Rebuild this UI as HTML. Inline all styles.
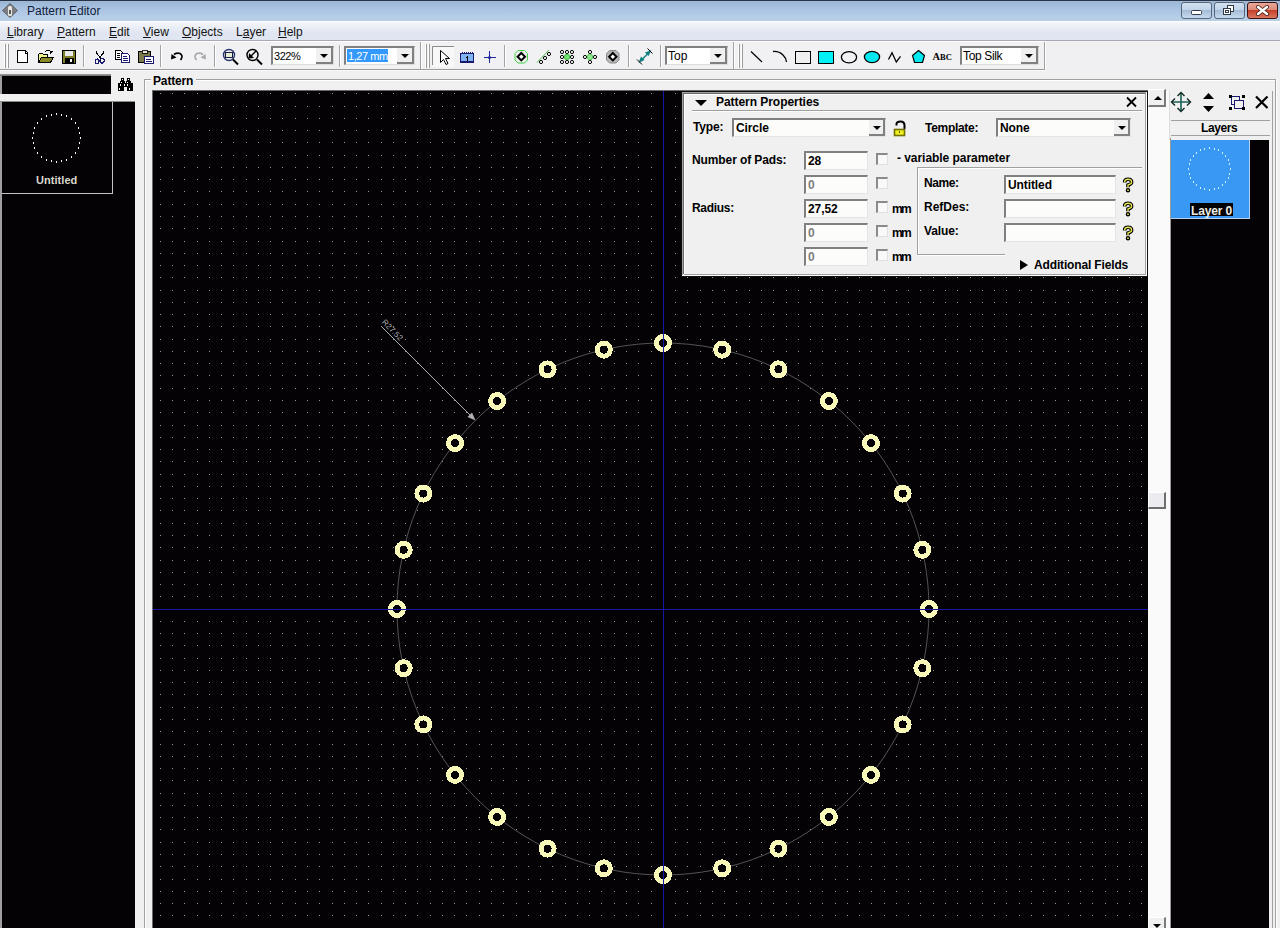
<!DOCTYPE html>
<html><head><meta charset="utf-8"><title>Pattern Editor</title>
<style>
html,body{margin:0;padding:0}
body{width:1280px;height:928px;overflow:hidden;position:relative;background:#f0f0f0;font-family:"Liberation Sans",sans-serif;color:#000}
.a{position:absolute;box-sizing:border-box}
svg.a{display:block}
.t{position:absolute;white-space:nowrap;line-height:normal;font-family:"Liberation Sans",sans-serif}
</style></head><body>
<div class="a" style="left:0px;top:0px;width:1280px;height:22px;background:linear-gradient(#26344a 0,#26344a 1px,#a8b8cc 1px,#9cb6d6 2px,#a2bcdc 5px,#aec6e4 11px,#b6cee8 17px,#b8cfe4 21px,#ffffff 21px)"></div>
<div class="t" style="left:27px;top:4px;font-size:12px;color:#10203a;">Pattern Editor</div>
<div class="a" style="left:0px;top:22px;width:1280px;height:18px;background:linear-gradient(#f6f6fb,#e9edf6 6px,#dfe5f1 12px,#e0e5f2)"></div>
<div class="a" style="left:0px;top:40px;width:1280px;height:1px;background:#a6aab4"></div>
<div class="t" style="left:7px;top:25px;font-size:12px;color:#141414;"><u>L</u>ibrary</div>
<div class="t" style="left:57px;top:25px;font-size:12px;color:#141414;"><u>P</u>attern</div>
<div class="t" style="left:109px;top:25px;font-size:12px;color:#141414;"><u>E</u>dit</div>
<div class="t" style="left:143px;top:25px;font-size:12px;color:#141414;"><u>V</u>iew</div>
<div class="t" style="left:182px;top:25px;font-size:12px;color:#141414;"><u>O</u>bjects</div>
<div class="t" style="left:236px;top:25px;font-size:12px;color:#141414;">L<u>a</u>yer</div>
<div class="t" style="left:278px;top:25px;font-size:12px;color:#141414;"><u>H</u>elp</div>
<div class="a" style="left:0px;top:41px;width:1280px;height:28px;background:#f1f1f3;border-top:1px solid #fff"></div>
<div class="a" style="left:0px;top:69px;width:1045px;height:1px;background:#9c9c9c"></div>
<div class="a" style="left:0px;top:70px;width:1046px;height:1px;background:#fafafa"></div>
<div class="a" style="left:0px;top:71px;width:1280px;height:857px;background:#f0f0f0"></div>
<div class="a" style="left:1046px;top:41px;width:234px;height:30px;background:#f0f0f2"></div>
<div class="a" style="left:4px;top:44px;width:1px;height:24px;background:#fff"></div>
<div class="a" style="left:5px;top:44px;width:1px;height:24px;background:#9a9a9a"></div>
<div class="a" style="left:7px;top:44px;width:1px;height:24px;background:#fff"></div>
<div class="a" style="left:8px;top:44px;width:1px;height:24px;background:#9a9a9a"></div>
<div class="a" style="left:83px;top:45px;width:1px;height:22px;background:#a4a4a4"></div>
<div class="a" style="left:84px;top:45px;width:1px;height:22px;background:#fff"></div>
<div class="a" style="left:160px;top:45px;width:1px;height:22px;background:#a4a4a4"></div>
<div class="a" style="left:161px;top:45px;width:1px;height:22px;background:#fff"></div>
<div class="a" style="left:214px;top:45px;width:1px;height:22px;background:#a4a4a4"></div>
<div class="a" style="left:215px;top:45px;width:1px;height:22px;background:#fff"></div>
<div class="a" style="left:339px;top:45px;width:1px;height:22px;background:#a4a4a4"></div>
<div class="a" style="left:340px;top:45px;width:1px;height:22px;background:#fff"></div>
<div class="a" style="left:420px;top:42px;width:1px;height:27px;background:#a0a0a0"></div>
<div class="a" style="left:421px;top:42px;width:1px;height:27px;background:#fff"></div>
<div class="a" style="left:425px;top:44px;width:1px;height:24px;background:#fff"></div>
<div class="a" style="left:426px;top:44px;width:1px;height:24px;background:#9a9a9a"></div>
<div class="a" style="left:428px;top:44px;width:1px;height:24px;background:#fff"></div>
<div class="a" style="left:429px;top:44px;width:1px;height:24px;background:#9a9a9a"></div>
<div class="a" style="left:504px;top:45px;width:1px;height:22px;background:#a4a4a4"></div>
<div class="a" style="left:505px;top:45px;width:1px;height:22px;background:#fff"></div>
<div class="a" style="left:628px;top:45px;width:1px;height:22px;background:#a4a4a4"></div>
<div class="a" style="left:629px;top:45px;width:1px;height:22px;background:#fff"></div>
<div class="a" style="left:660px;top:45px;width:1px;height:22px;background:#a4a4a4"></div>
<div class="a" style="left:661px;top:45px;width:1px;height:22px;background:#fff"></div>
<div class="a" style="left:733px;top:42px;width:1px;height:27px;background:#a0a0a0"></div>
<div class="a" style="left:734px;top:42px;width:1px;height:27px;background:#fff"></div>
<div class="a" style="left:738px;top:44px;width:1px;height:24px;background:#fff"></div>
<div class="a" style="left:739px;top:44px;width:1px;height:24px;background:#9a9a9a"></div>
<div class="a" style="left:741px;top:44px;width:1px;height:24px;background:#fff"></div>
<div class="a" style="left:742px;top:44px;width:1px;height:24px;background:#9a9a9a"></div>
<div class="a" style="left:1044px;top:42px;width:1px;height:27px;background:#a0a0a0"></div>
<div class="a" style="left:1045px;top:42px;width:1px;height:27px;background:#fff"></div>
<div class="a" style="left:433px;top:47px;width:21px;height:20px;background:#f8f8f8"></div>
<div class="a" style="left:271px;top:46px;width:63px;height:19px;background:#fff;border-top:2px solid #808080;border-left:2px solid #808080;border-right:1px solid #dcdcdc;border-bottom:1px solid #dcdcdc"></div>
<div class="a" style="left:316px;top:48px;width:17px;height:16px;background:#f0f0f0;border-right:2px solid #808080;border-bottom:2px solid #808080"></div>
<div class="a" style="left:320px;top:54px;width:0;height:0;border-left:4px solid transparent;border-right:4px solid transparent;border-top:4px solid #000"></div>
<div class="t" style="left:274px;top:50px;font-size:11px;letter-spacing:-0.45px;">322%</div>
<div class="a" style="left:344px;top:46px;width:71px;height:19px;background:#fff;border-top:2px solid #808080;border-left:2px solid #808080;border-right:1px solid #dcdcdc;border-bottom:1px solid #dcdcdc"></div>
<div class="a" style="left:397px;top:48px;width:17px;height:16px;background:#f0f0f0;border-right:2px solid #808080;border-bottom:2px solid #808080"></div>
<div class="a" style="left:401px;top:54px;width:0;height:0;border-left:4px solid transparent;border-right:4px solid transparent;border-top:4px solid #000"></div>
<div class="a" style="left:347px;top:49px;width:41px;height:13px;background:#3399ff"></div>
<div class="t" style="left:348px;top:50px;font-size:11px;color:#fff;letter-spacing:-0.45px;">1,27 mm</div>
<div class="a" style="left:665px;top:46px;width:63px;height:19px;background:#fff;border-top:2px solid #808080;border-left:2px solid #808080;border-right:1px solid #dcdcdc;border-bottom:1px solid #dcdcdc"></div>
<div class="a" style="left:710px;top:48px;width:17px;height:16px;background:#f0f0f0;border-right:2px solid #808080;border-bottom:2px solid #808080"></div>
<div class="a" style="left:714px;top:54px;width:0;height:0;border-left:4px solid transparent;border-right:4px solid transparent;border-top:4px solid #000"></div>
<div class="t" style="left:668px;top:49px;font-size:12px;letter-spacing:0px;">Top</div>
<div class="a" style="left:960px;top:46px;width:79px;height:19px;background:#fff;border-top:2px solid #808080;border-left:2px solid #808080;border-right:1px solid #dcdcdc;border-bottom:1px solid #dcdcdc"></div>
<div class="a" style="left:1021px;top:48px;width:17px;height:16px;background:#f0f0f0;border-right:2px solid #808080;border-bottom:2px solid #808080"></div>
<div class="a" style="left:1025px;top:54px;width:0;height:0;border-left:4px solid transparent;border-right:4px solid transparent;border-top:4px solid #000"></div>
<div class="t" style="left:963px;top:49px;font-size:12px;letter-spacing:-0.35px;">Top Silk</div>
<div class="a" style="left:0px;top:74px;width:111px;height:2px;background:linear-gradient(#a0a0a0,#707070)"></div>
<div class="a" style="left:0px;top:76px;width:2px;height:18px;background:#a0a0a0"></div>
<div class="a" style="left:2px;top:76px;width:109px;height:18px;background:#040204"></div>
<div class="a" style="left:0px;top:101px;width:135px;height:1px;background:#8a8a8a"></div>
<div class="a" style="left:0px;top:102px;width:2px;height:826px;background:#a0a0a0"></div>
<div class="a" style="left:2px;top:102px;width:133px;height:826px;background:#040204"></div>
<div class="a" style="left:112px;top:102px;width:1px;height:92px;background:#c4c4c4"></div>
<div class="a" style="left:2px;top:193px;width:111px;height:1px;background:#c4c4c4"></div>
<div class="t" style="left:36px;top:174px;font-size:11px;font-weight:bold;color:#d8d8cc;letter-spacing:0.05px;">Untitled</div>
<svg class="a" style="left:118px;top:78px" width="15" height="13" viewBox="118 78 15 13" shape-rendering="crispEdges">
<g fill="#000"><rect x="121" y="78" width="3" height="3"/><rect x="127" y="78" width="3" height="3"/>
<rect x="120" y="81" width="5" height="2"/><rect x="126" y="81" width="5" height="2"/>
<rect x="118" y="83" width="6" height="8"/><rect x="127" y="83" width="6" height="8"/><rect x="123" y="83" width="5" height="4"/></g>
<g fill="#fff"><rect x="122" y="79" width="1" height="1"/><rect x="128" y="79" width="1" height="1"/>
<rect x="121" y="82" width="1" height="1"/><rect x="127" y="82" width="1" height="1"/>
<rect x="120" y="84" width="1" height="2"/><rect x="124" y="84" width="1" height="2"/><rect x="127" y="84" width="1" height="2"/>
<rect x="119" y="88" width="1" height="2"/><rect x="129" y="88" width="1" height="2"/></g></svg>
<div class="a" style="left:144px;top:79px;width:1131px;height:1px;background:#a0a0a0"></div>
<div class="a" style="left:145px;top:80px;width:1130px;height:1px;background:#fff"></div>
<div class="a" style="left:144px;top:79px;width:1px;height:849px;background:#a0a0a0"></div>
<div class="a" style="left:145px;top:80px;width:1px;height:848px;background:#fff"></div>
<div class="a" style="left:1275px;top:79px;width:1px;height:849px;background:#a0a0a0"></div>
<div class="a" style="left:1276px;top:79px;width:1px;height:849px;background:#fff"></div>
<div class="a" style="left:151px;top:72px;width:45px;height:16px;background:#f0f0f0"></div>
<div class="t" style="left:153px;top:74px;font-size:12px;font-weight:bold;letter-spacing:-0.15px;">Pattern</div>
<div class="a" style="left:152px;top:90px;width:996px;height:1px;background:#6a6a6a"></div>
<div class="a" style="left:152px;top:90px;width:1px;height:838px;background:#6a6a6a"></div>
<svg class="a" width="995" height="837" viewBox="153 91 995 837" style="left:153px;top:91px">
<rect x="153" y="91" width="995" height="837" fill="#040205"/>
<defs><path id="gr" d="M160 0h1v1h-1zM172 0h1v1h-1zM184 0h1v1h-1zM197 0h1v1h-1zM209 0h1v1h-1zM221 0h1v1h-1zM233 0h1v1h-1zM246 0h1v1h-1zM258 0h1v1h-1zM270 0h1v1h-1zM282 0h1v1h-1zM295 0h1v1h-1zM307 0h1v1h-1zM319 0h1v1h-1zM332 0h1v1h-1zM344 0h1v1h-1zM356 0h1v1h-1zM368 0h1v1h-1zM381 0h1v1h-1zM393 0h1v1h-1zM405 0h1v1h-1zM417 0h1v1h-1zM430 0h1v1h-1zM442 0h1v1h-1zM454 0h1v1h-1zM466 0h1v1h-1zM479 0h1v1h-1zM491 0h1v1h-1zM503 0h1v1h-1zM516 0h1v1h-1zM528 0h1v1h-1zM540 0h1v1h-1zM552 0h1v1h-1zM565 0h1v1h-1zM577 0h1v1h-1zM589 0h1v1h-1zM601 0h1v1h-1zM614 0h1v1h-1zM626 0h1v1h-1zM638 0h1v1h-1zM651 0h1v1h-1zM663 0h1v1h-1zM675 0h1v1h-1zM687 0h1v1h-1zM700 0h1v1h-1zM712 0h1v1h-1zM724 0h1v1h-1zM736 0h1v1h-1zM749 0h1v1h-1zM761 0h1v1h-1zM773 0h1v1h-1zM786 0h1v1h-1zM798 0h1v1h-1zM810 0h1v1h-1zM822 0h1v1h-1zM835 0h1v1h-1zM847 0h1v1h-1zM859 0h1v1h-1zM871 0h1v1h-1zM884 0h1v1h-1zM896 0h1v1h-1zM908 0h1v1h-1zM920 0h1v1h-1zM933 0h1v1h-1zM945 0h1v1h-1zM957 0h1v1h-1zM970 0h1v1h-1zM982 0h1v1h-1zM994 0h1v1h-1zM1006 0h1v1h-1zM1019 0h1v1h-1zM1031 0h1v1h-1zM1043 0h1v1h-1zM1055 0h1v1h-1zM1068 0h1v1h-1zM1080 0h1v1h-1zM1092 0h1v1h-1zM1105 0h1v1h-1zM1117 0h1v1h-1zM1129 0h1v1h-1zM1141 0h1v1h-1z" fill="#949494"/></defs><g shape-rendering="crispEdges"><use href="#gr" y="93"/><use href="#gr" y="106"/><use href="#gr" y="118"/><use href="#gr" y="130"/><use href="#gr" y="142"/><use href="#gr" y="155"/><use href="#gr" y="167"/><use href="#gr" y="179"/><use href="#gr" y="191"/><use href="#gr" y="204"/><use href="#gr" y="216"/><use href="#gr" y="228"/><use href="#gr" y="241"/><use href="#gr" y="253"/><use href="#gr" y="265"/><use href="#gr" y="277"/><use href="#gr" y="290"/><use href="#gr" y="302"/><use href="#gr" y="314"/><use href="#gr" y="326"/><use href="#gr" y="339"/><use href="#gr" y="351"/><use href="#gr" y="363"/><use href="#gr" y="375"/><use href="#gr" y="388"/><use href="#gr" y="400"/><use href="#gr" y="412"/><use href="#gr" y="425"/><use href="#gr" y="437"/><use href="#gr" y="449"/><use href="#gr" y="461"/><use href="#gr" y="474"/><use href="#gr" y="486"/><use href="#gr" y="498"/><use href="#gr" y="510"/><use href="#gr" y="523"/><use href="#gr" y="535"/><use href="#gr" y="547"/><use href="#gr" y="560"/><use href="#gr" y="572"/><use href="#gr" y="584"/><use href="#gr" y="596"/><use href="#gr" y="609"/><use href="#gr" y="621"/><use href="#gr" y="633"/><use href="#gr" y="645"/><use href="#gr" y="658"/><use href="#gr" y="670"/><use href="#gr" y="682"/><use href="#gr" y="694"/><use href="#gr" y="707"/><use href="#gr" y="719"/><use href="#gr" y="731"/><use href="#gr" y="744"/><use href="#gr" y="756"/><use href="#gr" y="768"/><use href="#gr" y="780"/><use href="#gr" y="793"/><use href="#gr" y="805"/><use href="#gr" y="817"/><use href="#gr" y="829"/><use href="#gr" y="842"/><use href="#gr" y="854"/><use href="#gr" y="866"/><use href="#gr" y="879"/><use href="#gr" y="891"/><use href="#gr" y="903"/><use href="#gr" y="915"/></g>
<circle cx="663" cy="609" r="266" fill="none" stroke="#545454" stroke-width="1"/>
<g fill="#040205" stroke="#f8f8b8" stroke-width="5" shape-rendering="crispEdges"><circle cx="929.00" cy="609.00" r="6.5"/><circle cx="922.33" cy="549.81" r="6.5"/><circle cx="902.66" cy="493.59" r="6.5"/><circle cx="870.97" cy="443.15" r="6.5"/><circle cx="828.85" cy="401.03" r="6.5"/><circle cx="778.41" cy="369.34" r="6.5"/><circle cx="722.19" cy="349.67" r="6.5"/><circle cx="663.00" cy="343.00" r="6.5"/><circle cx="603.81" cy="349.67" r="6.5"/><circle cx="547.59" cy="369.34" r="6.5"/><circle cx="497.15" cy="401.03" r="6.5"/><circle cx="455.03" cy="443.15" r="6.5"/><circle cx="423.34" cy="493.59" r="6.5"/><circle cx="403.67" cy="549.81" r="6.5"/><circle cx="397.00" cy="609.00" r="6.5"/><circle cx="403.67" cy="668.19" r="6.5"/><circle cx="423.34" cy="724.41" r="6.5"/><circle cx="455.03" cy="774.85" r="6.5"/><circle cx="497.15" cy="816.97" r="6.5"/><circle cx="547.59" cy="848.66" r="6.5"/><circle cx="603.81" cy="868.33" r="6.5"/><circle cx="663.00" cy="875.00" r="6.5"/><circle cx="722.19" cy="868.33" r="6.5"/><circle cx="778.41" cy="848.66" r="6.5"/><circle cx="828.85" cy="816.97" r="6.5"/><circle cx="870.97" cy="774.85" r="6.5"/><circle cx="902.66" cy="724.41" r="6.5"/><circle cx="922.33" cy="668.19" r="6.5"/></g>
<g shape-rendering="crispEdges"><rect x="663" y="91" width="1" height="837" fill="#1616a8"/>
<rect x="153" y="609" width="995" height="1" fill="#1616a8"/></g>
<line x1="381.5" y1="326.5" x2="473" y2="418" stroke="#b0b0b0" stroke-width="1"/>
<path d="M475.5 420.5L467.5 417L472 412.5Z" fill="#b0b0b0"/>
<text transform="translate(381.6,322.6) rotate(46)" font-family="Liberation Sans" font-size="8" fill="#b0b0b0">R27.52</text>
</svg>
<div class="a" style="left:1148px;top:91px;width:22px;height:837px;background:#fafafa"></div>
<div class="a" style="left:1148px;top:89px;width:18px;height:18px;background:#f0f0f0;border-top:1px solid #fff;border-left:1px solid #fff;border-right:2px solid #7a7a7a;border-bottom:2px solid #7a7a7a"></div>
<div class="a" style="left:1154px;top:96px;width:0;height:0;border-left:4px solid transparent;border-right:4px solid transparent;border-bottom:4px solid #000"></div>
<div class="a" style="left:1148px;top:492px;width:18px;height:17px;background:#ececf0;border-top:1px solid #fff;border-left:1px solid #fff;border-right:2px solid #6e6e6e;border-bottom:2px solid #6e6e6e"></div>
<div class="a" style="left:1148px;top:917px;width:18px;height:19px;background:#f0f0f0;border-top:1px solid #fff;border-left:1px solid #fff;border-right:2px solid #7a7a7a;border-bottom:2px solid #7a7a7a"></div>
<div class="a" style="left:1153px;top:924px;width:0;height:0;border-left:4px solid transparent;border-right:4px solid transparent;border-top:4px solid #000"></div>
<div class="a" style="left:1169px;top:91px;width:1px;height:49px;background:#dcdcdc"></div>
<div class="a" style="left:1170px;top:138px;width:1px;height:790px;background:#9a9a9a"></div>
<div class="a" style="left:1272px;top:91px;width:1px;height:837px;background:#a0a0a0"></div>
<div class="a" style="left:1171px;top:120px;width:99px;height:1px;background:#a0a0a0"></div>
<div class="a" style="left:1171px;top:135px;width:99px;height:1px;background:#a0a0a0"></div>
<div class="a" style="left:1171px;top:121px;width:99px;height:14px;background:#f0f0f0"></div>
<div class="t" style="left:1201px;top:121px;font-size:12px;font-weight:bold;letter-spacing:-0.4px;">Layers</div>
<div class="a" style="left:1171px;top:140px;width:98px;height:788px;background:#040204"></div>
<div class="a" style="left:1171px;top:140px;width:79px;height:79px;background:#3898f4"></div>
<div class="a" style="left:1171px;top:218px;width:79px;height:1px;background:#b8d0ec"></div>
<div class="a" style="left:1249px;top:140px;width:1px;height:79px;background:#b8d0ec"></div>
<div class="a" style="left:1190px;top:203px;width:43px;height:13px;background:#040204"></div>
<div class="t" style="left:1191px;top:204px;font-size:12px;font-weight:bold;color:#ecece4;letter-spacing:-0.15px;">Layer 0</div>
<svg class="a" style="left:0;top:0" width="1280" height="300" viewBox="0 0 1280 300"><g fill="#f6f6f6" shape-rendering="crispEdges"><rect x="80" y="137" width="1" height="2"/><rect x="79" y="132" width="1" height="2"/><rect x="78" y="127" width="1" height="2"/><rect x="75" y="122" width="1" height="2"/><rect x="71" y="118" width="1" height="2"/><rect x="66" y="115" width="1" height="2"/><rect x="61" y="114" width="1" height="2"/><rect x="56" y="113" width="1" height="2"/><rect x="51" y="114" width="1" height="2"/><rect x="46" y="115" width="1" height="2"/><rect x="41" y="118" width="1" height="2"/><rect x="37" y="122" width="1" height="2"/><rect x="34" y="127" width="1" height="2"/><rect x="33" y="132" width="1" height="2"/><rect x="32" y="137" width="1" height="2"/><rect x="33" y="142" width="1" height="2"/><rect x="34" y="147" width="1" height="2"/><rect x="37" y="152" width="1" height="2"/><rect x="41" y="156" width="1" height="2"/><rect x="46" y="159" width="1" height="2"/><rect x="51" y="160" width="1" height="2"/><rect x="56" y="161" width="1" height="2"/><rect x="61" y="160" width="1" height="2"/><rect x="66" y="159" width="1" height="2"/><rect x="71" y="156" width="1" height="2"/><rect x="75" y="152" width="1" height="2"/><rect x="78" y="147" width="1" height="2"/><rect x="79" y="142" width="1" height="2"/></g><g fill="#c8f0ff" shape-rendering="crispEdges"><rect x="1230" y="168" width="1" height="2"/><rect x="1229" y="163" width="1" height="2"/><rect x="1228" y="159" width="1" height="2"/><rect x="1225" y="155" width="1" height="2"/><rect x="1222" y="152" width="1" height="2"/><rect x="1218" y="149" width="1" height="2"/><rect x="1214" y="148" width="1" height="2"/><rect x="1209" y="147" width="1" height="2"/><rect x="1204" y="148" width="1" height="2"/><rect x="1200" y="149" width="1" height="2"/><rect x="1196" y="152" width="1" height="2"/><rect x="1193" y="155" width="1" height="2"/><rect x="1190" y="159" width="1" height="2"/><rect x="1189" y="163" width="1" height="2"/><rect x="1188" y="168" width="1" height="2"/><rect x="1189" y="173" width="1" height="2"/><rect x="1190" y="177" width="1" height="2"/><rect x="1193" y="181" width="1" height="2"/><rect x="1196" y="184" width="1" height="2"/><rect x="1200" y="187" width="1" height="2"/><rect x="1204" y="188" width="1" height="2"/><rect x="1209" y="189" width="1" height="2"/><rect x="1214" y="188" width="1" height="2"/><rect x="1218" y="187" width="1" height="2"/><rect x="1222" y="184" width="1" height="2"/><rect x="1225" y="181" width="1" height="2"/><rect x="1228" y="177" width="1" height="2"/><rect x="1229" y="173" width="1" height="2"/></g></svg>
<svg class="a" style="left:1168px;top:88px" width="106" height="30" viewBox="1168 88 106 30">
<path d="M1181 93V111M1172 102H1190" stroke="#1a6058" stroke-width="1.6"/>
<path d="M1177.5 96L1181 92.5L1184.5 96M1177.5 108L1181 111.5L1184.5 108M1175 98.5L1171.5 102L1175 105.5M1187 98.5L1190.5 102L1187 105.5" fill="none" stroke="#102820" stroke-width="1.4"/>
<path d="M1203 99L1208.5 93L1214 99Z M1203 106L1208.5 112L1214 106Z" fill="#000"/>
<g shape-rendering="crispEdges">
<rect x="1231.5" y="96.5" width="8" height="8" fill="none" stroke="#181870"/>
<rect x="1234.5" y="100.5" width="9" height="8" fill="#f0f0f0" stroke="#181870"/>
<rect x="1229" y="95" width="3" height="3" fill="#000"/><rect x="1242" y="95" width="3" height="3" fill="#000"/>
<rect x="1229" y="107" width="3" height="3" fill="#000"/><rect x="1242" y="107" width="3" height="3" fill="#000"/>
</g>
<path d="M1256 96.5L1267.5 108M1267.5 96.5L1256 108" stroke="#000" stroke-width="2.2"/>
</svg>
<div class="a" style="left:681px;top:91px;width:467px;height:186px;background:#f0f0f0;border:1px solid #101010"></div>
<div class="a" style="left:682px;top:92px;width:464px;height:1px;background:#a0a0a0"></div>
<div class="a" style="left:682px;top:92px;width:1px;height:183px;background:#a0a0a0"></div>
<div class="a" style="left:683px;top:93px;width:462px;height:1px;background:#6a6a6a"></div>
<div class="a" style="left:683px;top:93px;width:1px;height:181px;background:#6a6a6a"></div>
<div class="a" style="left:684px;top:94px;width:461px;height:1px;background:#fff"></div>
<div class="a" style="left:684px;top:94px;width:1px;height:180px;background:#fff"></div>
<div class="a" style="left:1145px;top:93px;width:1px;height:182px;background:#a0a0a0"></div>
<div class="a" style="left:684px;top:274px;width:462px;height:1px;background:#a0a0a0"></div>
<div class="a" style="left:1146px;top:92px;width:1px;height:184px;background:#fff"></div>
<div class="a" style="left:682px;top:275px;width:465px;height:1px;background:#fff"></div>
<div class="a" style="left:695px;top:100px;width:0;height:0;border-left:6px solid transparent;border-right:6px solid transparent;border-top:6px solid #000"></div>
<div class="t" style="left:716px;top:95px;font-size:12px;font-weight:bold;letter-spacing:-0.05px;">Pattern Properties</div>
<div class="a" style="left:692px;top:110px;width:450px;height:1px;background:#a0a0a0"></div>
<div class="a" style="left:692px;top:111px;width:450px;height:1px;background:#fff"></div>
<svg class="a" style="left:1125px;top:96px" width="14" height="12" viewBox="0 0 14 12"><path d="M2 1.5L11 10.5M11 1.5L2 10.5" stroke="#000" stroke-width="1.8"/></svg>
<div class="t" style="left:693px;top:120px;font-size:12px;font-weight:bold;letter-spacing:-0.15px;">Type:</div>
<div class="a" style="left:732px;top:118px;width:154px;height:19px;background:#fcfcfa;border-top:2px solid #808080;border-left:2px solid #808080;border-right:1px solid #e4e4e4;border-bottom:1px solid #e4e4e4"></div>
<div class="t" style="left:736px;top:121px;font-size:12px;font-weight:bold;letter-spacing:-0.1px;">Circle</div>
<div class="a" style="left:869px;top:120px;width:16px;height:16px;background:#f0f0f0;border-right:2px solid #808080;border-bottom:2px solid #808080"></div>
<div class="a" style="left:873px;top:126px;width:0;height:0;border-left:4px solid transparent;border-right:4px solid transparent;border-top:4px solid #000"></div>
<div class="t" style="left:925px;top:121px;font-size:12px;font-weight:bold;letter-spacing:-0.3px;">Template:</div>
<div class="a" style="left:996px;top:118px;width:135px;height:19px;background:#fcfcfa;border-top:2px solid #808080;border-left:2px solid #808080;border-right:1px solid #e4e4e4;border-bottom:1px solid #e4e4e4"></div>
<div class="t" style="left:1000px;top:121px;font-size:12px;font-weight:bold;letter-spacing:-0.1px;">None</div>
<div class="a" style="left:1114px;top:120px;width:16px;height:16px;background:#f0f0f0;border-right:2px solid #808080;border-bottom:2px solid #808080"></div>
<div class="a" style="left:1118px;top:126px;width:0;height:0;border-left:4px solid transparent;border-right:4px solid transparent;border-top:4px solid #000"></div>
<div class="t" style="left:692px;top:153px;font-size:12px;font-weight:bold;letter-spacing:-0.1px;">Number of Pads:</div>
<div class="t" style="left:692px;top:201px;font-size:12px;font-weight:bold;letter-spacing:-0.3px;">Radius:</div>
<div class="a" style="left:804px;top:151px;width:64px;height:19px;background:#fcfcfa;border-top:2px solid #808080;border-left:2px solid #808080;border-right:1px solid #e4e4e4;border-bottom:1px solid #e4e4e4"></div>
<div class="t" style="left:808px;top:154px;font-size:12px;font-weight:bold;letter-spacing:-0.1px;">28</div>
<div class="a" style="left:876px;top:153px;width:12px;height:12px;background:#f8f8f8;border-top:2px solid #8a8a8a;border-left:2px solid #8a8a8a;border-right:1px solid #e0e0e0;border-bottom:1px solid #e0e0e0"></div>
<div class="a" style="left:804px;top:175px;width:64px;height:19px;background:#fcfcfa;border-top:2px solid #808080;border-left:2px solid #808080;border-right:1px solid #e4e4e4;border-bottom:1px solid #e4e4e4"></div>
<div class="t" style="left:808px;top:178px;font-size:12px;font-weight:bold;color:#808080;letter-spacing:-0.1px;">0</div>
<div class="a" style="left:876px;top:177px;width:12px;height:12px;background:#f8f8f8;border-top:2px solid #8a8a8a;border-left:2px solid #8a8a8a;border-right:1px solid #e0e0e0;border-bottom:1px solid #e0e0e0"></div>
<div class="a" style="left:804px;top:199px;width:64px;height:19px;background:#fcfcfa;border-top:2px solid #808080;border-left:2px solid #808080;border-right:1px solid #e4e4e4;border-bottom:1px solid #e4e4e4"></div>
<div class="t" style="left:808px;top:202px;font-size:12px;font-weight:bold;letter-spacing:-0.1px;">27,52</div>
<div class="a" style="left:876px;top:201px;width:12px;height:12px;background:#f8f8f8;border-top:2px solid #8a8a8a;border-left:2px solid #8a8a8a;border-right:1px solid #e0e0e0;border-bottom:1px solid #e0e0e0"></div>
<div class="a" style="left:804px;top:223px;width:64px;height:19px;background:#fcfcfa;border-top:2px solid #808080;border-left:2px solid #808080;border-right:1px solid #e4e4e4;border-bottom:1px solid #e4e4e4"></div>
<div class="t" style="left:808px;top:226px;font-size:12px;font-weight:bold;color:#808080;letter-spacing:-0.1px;">0</div>
<div class="a" style="left:876px;top:225px;width:12px;height:12px;background:#f8f8f8;border-top:2px solid #8a8a8a;border-left:2px solid #8a8a8a;border-right:1px solid #e0e0e0;border-bottom:1px solid #e0e0e0"></div>
<div class="a" style="left:804px;top:247px;width:64px;height:19px;background:#fcfcfa;border-top:2px solid #808080;border-left:2px solid #808080;border-right:1px solid #e4e4e4;border-bottom:1px solid #e4e4e4"></div>
<div class="t" style="left:808px;top:250px;font-size:12px;font-weight:bold;color:#808080;letter-spacing:-0.1px;">0</div>
<div class="a" style="left:876px;top:249px;width:12px;height:12px;background:#f8f8f8;border-top:2px solid #8a8a8a;border-left:2px solid #8a8a8a;border-right:1px solid #e0e0e0;border-bottom:1px solid #e0e0e0"></div>
<div class="t" style="left:897px;top:151px;font-size:12px;font-weight:bold;letter-spacing:-0.05px;">- variable parameter</div>
<div class="t" style="left:892px;top:202px;font-size:12px;font-weight:bold;letter-spacing:-1.6px;">mm</div>
<div class="t" style="left:892px;top:226px;font-size:12px;font-weight:bold;letter-spacing:-1.6px;">mm</div>
<div class="t" style="left:892px;top:250px;font-size:12px;font-weight:bold;letter-spacing:-1.6px;">mm</div>
<div class="a" style="left:917px;top:167px;width:225px;height:1px;background:#a0a0a0"></div>
<div class="a" style="left:918px;top:168px;width:224px;height:1px;background:#fff"></div>
<div class="a" style="left:917px;top:167px;width:1px;height:88px;background:#a0a0a0"></div>
<div class="a" style="left:918px;top:168px;width:1px;height:87px;background:#fff"></div>
<div class="a" style="left:917px;top:254px;width:88px;height:1px;background:#a0a0a0"></div>
<div class="a" style="left:918px;top:255px;width:87px;height:1px;background:#fff"></div>
<div class="t" style="left:924px;top:176px;font-size:12px;font-weight:bold;letter-spacing:-0.4px;">Name:</div>
<div class="t" style="left:924px;top:200px;font-size:12px;font-weight:bold;letter-spacing:0px;">RefDes:</div>
<div class="t" style="left:924px;top:224px;font-size:12px;font-weight:bold;letter-spacing:-0.1px;">Value:</div>
<div class="a" style="left:1004px;top:175px;width:112px;height:19px;background:#fcfcfa;border-top:2px solid #808080;border-left:2px solid #808080;border-right:1px solid #e4e4e4;border-bottom:1px solid #e4e4e4"></div>
<div class="t" style="left:1008px;top:178px;font-size:12px;font-weight:bold;letter-spacing:-0.1px;">Untitled</div>
<div class="a" style="left:1004px;top:199px;width:112px;height:19px;background:#fcfcfa;border-top:2px solid #808080;border-left:2px solid #808080;border-right:1px solid #e4e4e4;border-bottom:1px solid #e4e4e4"></div>
<div class="a" style="left:1004px;top:223px;width:112px;height:19px;background:#fcfcfa;border-top:2px solid #808080;border-left:2px solid #808080;border-right:1px solid #e4e4e4;border-bottom:1px solid #e4e4e4"></div>
<div class="a" style="left:1020px;top:260px;width:0;height:0;border-top:5px solid transparent;border-bottom:5px solid transparent;border-left:8px solid #000"></div>
<div class="t" style="left:1034px;top:258px;font-size:12px;font-weight:bold;letter-spacing:-0.15px;">Additional Fields</div>
<svg class="a" style="left:0;top:0" width="1280" height="300" viewBox="0 0 1280 300">
<path d="M896.5 125.5V124Q896.5 121.5 900.5 121.5Q904.5 121.5 904.5 125.5V129" fill="none" stroke="#000" stroke-width="2"/>
<rect x="894.5" y="129.5" width="10" height="6" fill="#f0f020" stroke="#707000" stroke-width="1.6"/>
<rect x="899" y="131" width="1" height="2" fill="#606000"/>
<g transform="translate(1128,184)"><path d="M-3.4 -1.4Q-3.4 -4.7 0 -4.7Q3.6 -4.7 3.6 -1.7Q3.6 0 0 1V3.2" fill="none" stroke="#000" stroke-width="3.6"/><path d="M-3.4 -1.4Q-3.4 -4.7 0 -4.7Q3.6 -4.7 3.6 -1.7Q3.6 0 0 1V3.2" fill="none" stroke="#e6e650" stroke-width="1.4"/><circle cx="0" cy="6.2" r="1.6" fill="#e6e650" stroke="#000" stroke-width="1.4"/></g><g transform="translate(1128,208)"><path d="M-3.4 -1.4Q-3.4 -4.7 0 -4.7Q3.6 -4.7 3.6 -1.7Q3.6 0 0 1V3.2" fill="none" stroke="#000" stroke-width="3.6"/><path d="M-3.4 -1.4Q-3.4 -4.7 0 -4.7Q3.6 -4.7 3.6 -1.7Q3.6 0 0 1V3.2" fill="none" stroke="#e6e650" stroke-width="1.4"/><circle cx="0" cy="6.2" r="1.6" fill="#e6e650" stroke="#000" stroke-width="1.4"/></g><g transform="translate(1128,232)"><path d="M-3.4 -1.4Q-3.4 -4.7 0 -4.7Q3.6 -4.7 3.6 -1.7Q3.6 0 0 1V3.2" fill="none" stroke="#000" stroke-width="3.6"/><path d="M-3.4 -1.4Q-3.4 -4.7 0 -4.7Q3.6 -4.7 3.6 -1.7Q3.6 0 0 1V3.2" fill="none" stroke="#e6e650" stroke-width="1.4"/><circle cx="0" cy="6.2" r="1.6" fill="#e6e650" stroke="#000" stroke-width="1.4"/></g>
</svg>

<svg width="1280" height="120" viewBox="0 0 1280 120" style="position:absolute;left:0;top:0;display:block;pointer-events:none">
<!-- app icon -->
<path d="M10 3.5L17.5 10.5L10 17.5L2.5 10.5Z" fill="#7c7e84" stroke="#606268" stroke-width="1"/>
<rect x="8" y="6" width="4" height="10" rx="1.5" fill="#e6e6e2"/>
<rect x="9" y="10" width="2" height="4" fill="#5c5a56"/>
<!-- window buttons -->
<g>
<rect x="1181.5" y="2.5" width="30" height="16" rx="2.5" fill="url(#wb)" stroke="#56657a"/>
<rect x="1214.5" y="2.5" width="30" height="16" rx="2.5" fill="url(#wb)" stroke="#56657a"/>
<rect x="1247.5" y="2.5" width="30" height="16" rx="2.5" fill="url(#wc)" stroke="#3a1410"/>
<rect x="1191.5" y="10.5" width="10" height="4" rx="1" fill="#fff" stroke="#333a44"/>
<rect x="1227.5" y="5.5" width="6" height="6" fill="#fff" stroke="#333a44"/>
<rect x="1223.5" y="8.5" width="7" height="6" fill="#fff" stroke="#333a44"/>
<rect x="1225.5" y="10.5" width="3" height="2" fill="none" stroke="#333a44"/>
<path d="M1258 7L1267 14M1267 7L1258 14" stroke="#3a1a14" stroke-width="4" stroke-linecap="round"/>
<path d="M1258 7L1267 14M1267 7L1258 14" stroke="#fff" stroke-width="2.4" stroke-linecap="round"/>
</g>
<defs>
<linearGradient id="wb" x1="0" y1="0" x2="0" y2="1"><stop offset="0" stop-color="#d4e2f2"/><stop offset="0.45" stop-color="#c2d4ea"/><stop offset="0.5" stop-color="#a6bcd6"/><stop offset="1" stop-color="#c8dcf0"/></linearGradient>
<linearGradient id="wc" x1="0" y1="0" x2="0" y2="1"><stop offset="0" stop-color="#eaaa9c"/><stop offset="0.45" stop-color="#dc8a78"/><stop offset="0.5" stop-color="#c4402a"/><stop offset="1" stop-color="#dc7a64"/></linearGradient>
</defs>

<g shape-rendering="crispEdges">
<!-- new -->
<path d="M17.5 50.5H25.5L27.5 52.5V62.5H17.5Z" fill="#fff" stroke="#000"/>
<path d="M25 51v2h2" fill="none" stroke="#000"/>
<!-- open -->
<path d="M38.5 62.5V54.5L39.5 53.5H42.5L43.5 54.5H47.5V57.5" fill="#f0f08a" stroke="#000"/>
<path d="M38.5 62.5L41.5 57.5H53.5L50.5 62.5Z" fill="#8a8a2a" stroke="#000"/>
<path d="M44.5 52.5Q46 50 49.5 50.5Q51 51 51.5 52.5" fill="none" stroke="#000"/>
<path d="M50 54L53 51.5L50 51Z" fill="#000"/>
<!-- save -->
<rect x="62.5" y="50.5" width="13" height="13" fill="#7e7e2c" stroke="#000"/>
<rect x="65" y="51" width="8" height="5" fill="#e8e8e8"/>
<rect x="65" y="58" width="9" height="6" fill="#000"/>
<rect x="70" y="59" width="2" height="3" fill="#fff"/>
<!-- scissors -->
<path d="M96.5 50.5V53L101.2 58.5M103.5 50.5V53L98.8 58.5" fill="none" stroke="#000" stroke-width="1.1"/>
<ellipse cx="97.2" cy="61.3" rx="1.9" ry="2.3" fill="none" stroke="#1a1a70" stroke-width="1.1"/>
<ellipse cx="102.3" cy="60.8" rx="1.9" ry="2.3" fill="none" stroke="#1a1a70" stroke-width="1.1"/>
<!-- copy -->
<path d="M115.5 50.5H120.5L122.5 52.5V59.5H115.5Z" fill="#fff" stroke="#000"/>
<path d="M117 53h3M117 55h3M117 57h3" stroke="#000"/>
<path d="M121.5 53.5H127.5L129.5 55.5V62.5H121.5Z" fill="#fff" stroke="#1a1a70"/>
<path d="M123 56h4M123 58h5M123 60h5" stroke="#1a1a70"/>
<!-- paste -->
<rect x="138.5" y="51.5" width="12" height="11" fill="#7a7a4a" stroke="#000"/>
<rect x="142" y="50" width="5" height="3" fill="#e8e8d8" stroke="#000" stroke-width="0.8"/>
<rect x="144.5" y="56.5" width="9" height="7" fill="#fff" stroke="#1a1a70"/>
<path d="M146 59h5M146 61h6" stroke="#1a1a70"/>
</g>
<!-- undo/redo -->
<path d="M174 54.5Q177 52.5 180 53.5Q183 55.5 181.5 58.5L180.5 60" fill="none" stroke="#000" stroke-width="1.6"/>
<path d="M171 59.5L171.5 54L176.5 57.5Z" fill="#000"/>
<path d="M203 54.5Q200 52.5 197 53.5Q194 55.5 195.5 58.5L196.5 60" fill="none" stroke="#a8a8a8" stroke-width="1.6"/>
<path d="M206 59.5L205.5 54L200.5 57.5Z" fill="#a8a8a8"/>
<!-- zoom -->
<circle cx="229" cy="55" r="5.5" fill="none" stroke="#24346c" stroke-width="1.4"/>
<rect x="225.5" y="52.5" width="7" height="5" fill="#e6eed8" stroke="#1a1a3a"/>
<path d="M233 59.5L238 64.5" stroke="#000" stroke-width="2"/>
<circle cx="252.5" cy="55" r="5.5" fill="none" stroke="#000" stroke-width="1.4"/>
<path d="M250 57L256 51" stroke="#000" stroke-width="1.4"/>
<path d="M248.5 58.5L249 53L254 58Z" fill="#000"/>
<path d="M257 59.5L262 64.5" stroke="#000" stroke-width="2"/>
<!-- pressed arrow button -->
<path d="M432.5 65V46.5H454" fill="none" stroke="#8a8a8a"/>
<path d="M440.5 50.5V62.5L443.5 59.5L446 64.5L448 63.5L445.5 58.5H449.5Z" fill="#fff" stroke="#000" stroke-linejoin="miter"/>
<!-- ruler -->
<g shape-rendering="crispEdges">
<rect x="460.5" y="53.5" width="13" height="9" fill="#80b4f0" stroke="#1a1a70"/>
<path d="M462 53v-1M464 53v-1M466 53v-1M468 53v-1M470 53v-1M472 53v-1" stroke="#1a1a70"/>
<rect x="460" y="61" width="14" height="2" fill="#1a1a70"/>
<path d="M467.5 56V60.5M466 57h1" stroke="#000"/>
<path d="M489.5 51V63M484 57.5H496" stroke="#1c2898"/>
</g>
<circle cx="489.5" cy="57.5" r="1.5" fill="#1c2898"/>
<!-- pad -->
<path d="M518 50.5H524.5L527.5 53.5V60L524.5 63H518L515 60V53.5Z" fill="#f0f0f0" stroke="#40d040" stroke-width="1"/>
<path d="M521.3 53L525 56.7L521.3 60.4L517.6 56.7Z" fill="#fff" stroke="#000" stroke-width="2"/>
<!-- line of pads -->
<path d="M537 62.5L549 50" stroke="#50c050" stroke-width="1"/>
<g fill="#fff" stroke="#000" stroke-width="1">
<circle cx="541" cy="62" r="1.6"/><circle cx="545" cy="58" r="1.6"/><circle cx="549" cy="54" r="1.6"/>
<circle cx="562" cy="52" r="1.6"/><circle cx="567" cy="52" r="1.6"/><circle cx="572" cy="52" r="1.6"/>
<circle cx="562" cy="57" r="1.6"/><circle cx="572" cy="57" r="1.6"/>
<circle cx="562" cy="62" r="1.6"/><circle cx="567" cy="62" r="1.6"/><circle cx="572" cy="62" r="1.6"/>
<circle cx="590" cy="52" r="1.6"/><circle cx="585" cy="57" r="1.6"/><circle cx="595" cy="57" r="1.6"/><circle cx="590" cy="62" r="1.6"/>
</g>
<circle cx="567" cy="57" r="2.8" fill="#70e070" stroke="#30b030" stroke-width="0.8"/>
<circle cx="590" cy="57" r="2.8" fill="#90e890" stroke="#40c040" stroke-width="0.8"/>
<!-- grey pad -->
<path d="M609.5 50.5H616L619 53.5V60L616 63H609.5L606.5 60V53.5Z" fill="#b8b8b8" stroke="#8a8a8a"/>
<path d="M612.8 53L616.5 56.7L612.8 60.4L609.1 56.7Z" fill="#fff" stroke="#000" stroke-width="2"/>
<!-- dimension -->
<path d="M640 61.5L650 51.5" stroke="#108080" stroke-width="1.4"/>
<path d="M638.5 63L641 56.5L644.5 60Z M651.5 50L645 52.5L648.5 56Z" fill="#108080"/>
<path d="M637 59.5L642 64.5M647.5 48.5L652.5 53.5" stroke="#000" stroke-width="1"/>
<!-- draw tools -->
<path d="M751 51.5L762 62" stroke="#000" stroke-width="1.2"/>
<path d="M773 51.5Q779 51 783 55Q786.5 58.5 786.5 62" fill="none" stroke="#000" stroke-width="1.3"/>
<g shape-rendering="crispEdges">
<rect x="795.5" y="51.5" width="15" height="12" fill="#f0f0f0" stroke="#000" stroke-width="1.4"/>
<rect x="818.5" y="51.5" width="15" height="12" fill="#00f0f8" stroke="#000" stroke-width="1.4"/>
</g>
<ellipse cx="849" cy="57.2" rx="7.6" ry="5.6" fill="none" stroke="#000" stroke-width="1.3"/>
<ellipse cx="872" cy="57" rx="7.6" ry="5.6" fill="#00e8f0" stroke="#000" stroke-width="1.3"/>
<path d="M888.5 59.5L892 52.8L896.3 62L900.5 56.3" fill="none" stroke="#000" stroke-width="1.3"/>
<path d="M918.5 50.5L924.5 55.5L922.5 62.5H914.5L912.5 55.5Z" fill="#00e8f0" stroke="#000" stroke-width="1.2"/>
<text x="932.5" y="60" font-family="Liberation Serif" font-weight="bold" font-size="10.5" fill="#000">A<tspan font-size="8.5">BC</tspan></text>
</svg>

</body></html>
